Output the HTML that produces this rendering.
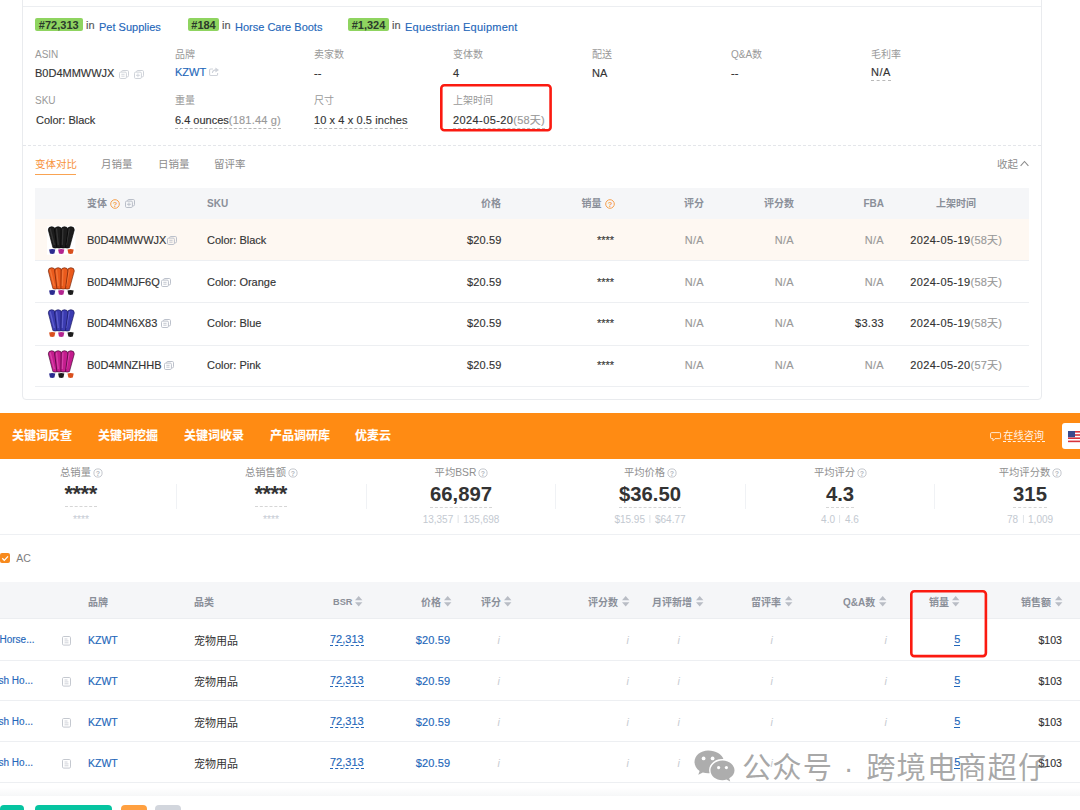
<!DOCTYPE html>
<html lang="zh-CN"><head><meta charset="utf-8"><title>page</title>
<style>
html,body{margin:0;padding:0;background:#fff;}
body{width:1080px;height:810px;overflow:hidden;position:relative;font-family:"Liberation Sans","Noto Sans CJK SC",sans-serif;}
.t{position:absolute;white-space:nowrap;-webkit-text-stroke:0.14px currentColor;}
.n{position:absolute;white-space:nowrap;}
.b{position:absolute;}
.g{color:#999}
.d{letter-spacing:0.4px}
.e{letter-spacing:0.2px}
.sp{display:inline-block;width:1px;height:8px;background:#dfe3e8;margin:0 4.5px;vertical-align:-0.5px}
svg{position:absolute;overflow:visible}
</style></head><body>

<div class="b" style="left:22px;top:-10px;width:1018px;height:408px;background:#fff;border:1px solid #e9ebee;border-radius:4px;"></div>
<div class="b" style="left:23px;top:6px;width:1018px;height:1px;background:#eceef1;"></div>
<div class="b" style="left:35px;top:18px;width:47.5px;height:13px;background:#8fd460;border-radius:2px;"></div>
<span class="n" style="top:16.5px;font-size:11px;color:#2b3a2b;line-height:16px;font-weight:700;left:58.75px;transform:translateX(-50%);">#72,313</span>
<span class="t" style="top:17px;font-size:11px;color:#555;line-height:16px;left:86px;">in</span>
<span class="t" style="top:18.8px;font-size:11px;color:#2467ba;line-height:16px;left:99px;">Pet Supplies</span>
<div class="b" style="left:188px;top:18px;width:31px;height:13px;background:#8fd460;border-radius:2px;"></div>
<span class="n" style="top:16.5px;font-size:11px;color:#2b3a2b;line-height:16px;font-weight:700;left:203.5px;transform:translateX(-50%);">#184</span>
<span class="t" style="top:17px;font-size:11px;color:#555;line-height:16px;left:222px;">in</span>
<span class="t" style="top:18.8px;font-size:11px;color:#2467ba;line-height:16px;left:235px;">Horse Care Boots</span>
<div class="b" style="left:348px;top:18px;width:41px;height:13px;background:#8fd460;border-radius:2px;"></div>
<span class="n" style="top:16.5px;font-size:11px;color:#2b3a2b;line-height:16px;font-weight:700;left:368.5px;transform:translateX(-50%);">#1,324</span>
<span class="t" style="top:17px;font-size:11px;color:#555;line-height:16px;left:392px;">in</span>
<span class="t" style="top:18.8px;font-size:11px;color:#2467ba;line-height:16px;left:405px;letter-spacing:0.22px;">Equestrian Equipment</span>
<span class="n" style="top:46.5px;font-size:10px;color:#999;line-height:16px;left:35px;">ASIN</span>
<span class="n" style="top:46.5px;font-size:10px;color:#999;line-height:16px;left:175px;">品牌</span>
<span class="n" style="top:46.5px;font-size:10px;color:#999;line-height:16px;left:314px;">卖家数</span>
<span class="n" style="top:46.5px;font-size:10px;color:#999;line-height:16px;left:453px;">变体数</span>
<span class="n" style="top:46.5px;font-size:10px;color:#999;line-height:16px;left:592px;">配送</span>
<span class="n" style="top:46.5px;font-size:10px;color:#999;line-height:16px;left:731px;">Q&amp;A数</span>
<span class="n" style="top:46.5px;font-size:10px;color:#999;line-height:16px;left:871px;">毛利率</span>
<span class="t" style="top:65.3px;font-size:11px;color:#333;line-height:16px;left:35px;">B0D4MMWWJX</span>
<svg style="left:119px;top:69.5px" width="10" height="9" viewBox="0 0 10 9"><rect x="2.6" y="0.5" width="6.9" height="6.4" rx="1.2" fill="#fff" stroke="#cfd3d9" stroke-width="1"/><rect x="0.5" y="2.1" width="6.9" height="6.4" rx="1.2" fill="#fff" stroke="#cfd3d9" stroke-width="1"/><path d="M2.3 4.3H5.6M2.3 6.2H5.6" stroke="#cfd3d9" stroke-width="0.9"/></svg>
<svg style="left:133.5px;top:69.5px" width="10" height="9" viewBox="0 0 10 9"><rect x="2.6" y="0.5" width="6.9" height="6.4" rx="1.2" fill="#fff" stroke="#cfd3d9" stroke-width="1"/><rect x="0.5" y="2.1" width="6.9" height="6.4" rx="1.2" fill="#fff" stroke="#cfd3d9" stroke-width="1"/><path d="M2 5.3H5.9M3.95 3.4V7.2" stroke="#cfd3d9" stroke-width="0.9"/></svg>
<span class="t" style="top:64px;font-size:11px;color:#2467ba;line-height:16px;left:175px;">KZWT</span>
<svg style="left:209px;top:67.3px" width="10.5" height="9" viewBox="0 0 10.5 9"><path d="M4 2H1.6Q0.6 2 0.6 3V7.6Q0.6 8.5 1.6 8.5H7.6Q8.6 8.5 8.6 7.6V6" fill="none" stroke="#cfd3da" stroke-width="1.1"/><path d="M3.4 6Q3.6 2.9 7 2.9" fill="none" stroke="#cfd3da" stroke-width="1.1"/><path d="M6.4 0.4L10 2.9L6.4 5.4Z" fill="#cfd3da"/></svg>
<span class="t" style="top:65.3px;font-size:11px;color:#333;line-height:16px;left:314px;">--</span>
<span class="t" style="top:65.3px;font-size:11px;color:#333;line-height:16px;left:453px;">4</span>
<span class="t" style="top:65.3px;font-size:11px;color:#333;line-height:16px;left:592px;">NA</span>
<span class="t" style="top:65.3px;font-size:11px;color:#333;line-height:16px;left:731px;">--</span>
<span class="t" style="top:64.8px;font-size:11px;color:#333;line-height:16px;left:871px;border-bottom:1px dashed #b9b9b9;line-height:15px;letter-spacing:0.5px;">N/A</span>
<span class="n" style="top:92.5px;font-size:10px;color:#999;line-height:16px;left:35px;">SKU</span>
<span class="n" style="top:92.5px;font-size:10px;color:#999;line-height:16px;left:175px;">重量</span>
<span class="n" style="top:92.5px;font-size:10px;color:#999;line-height:16px;left:314px;">尺寸</span>
<span class="n" style="top:92.5px;font-size:10px;color:#999;line-height:16px;left:453px;">上架时间</span>
<span class="t" style="top:112px;font-size:11px;color:#333;line-height:16px;left:36px;">Color: Black</span>
<span class="t" style="top:112.5px;font-size:11px;color:#333;line-height:16px;left:175px;border-bottom:1px dashed #b9b9b9;line-height:15px;">6.4 ounces<span class="g e">(181.44 g)</span></span>
<span class="t" style="top:112.5px;font-size:11px;color:#333;line-height:16px;left:314px;border-bottom:1px dashed #b9b9b9;line-height:15px;letter-spacing:0.1px;">10 x 4 x 0.5 inches</span>
<span class="t" style="top:112.5px;font-size:11px;color:#333;line-height:16px;left:453px;border-bottom:1px dashed #b9b9b9;line-height:15px;"><span class="d">2024-05-20</span><span class="g e">(58天)</span></span>
<div class="b" style="left:23px;top:144.5px;width:1018px;height:0px;background:transparent;border-top:1px dashed #e4e6ea;"></div>
<span class="n" style="top:156px;font-size:10.5px;color:#f7923a;line-height:16px;left:35px;">变体对比</span>
<div class="b" style="left:35px;top:173.6px;width:41px;height:1.4px;background:#f9a352;"></div>
<span class="n" style="top:156px;font-size:10.5px;color:#8c8c8c;line-height:16px;left:101px;">月销量</span>
<span class="n" style="top:156px;font-size:10.5px;color:#8c8c8c;line-height:16px;left:158px;">日销量</span>
<span class="n" style="top:156px;font-size:10.5px;color:#8c8c8c;line-height:16px;left:214px;">留评率</span>
<span class="n" style="top:156px;font-size:10.5px;color:#8c8c8c;line-height:16px;left:997px;">收起</span>
<svg style="left:1020px;top:160.3px" width="9" height="7" viewBox="0 0 9 7"><path d="M0.6 5.8 L4.5 1.5 L8.4 5.8" fill="none" stroke="#8c8c8c" stroke-width="1.1"/></svg>
<div class="b" style="left:35px;top:188px;width:994px;height:31px;background:#f5f6f8;"></div>
<span class="n" style="top:195.7px;font-size:10px;color:#8a8f99;line-height:16px;font-weight:700;left:87px;">变体</span>
<svg style="left:110.1px;top:198.8px" width="10" height="10" viewBox="0 0 10 10"><circle cx="5" cy="5" r="4.3" fill="none" stroke="#f5a04e" stroke-width="1"/><text x="5" y="7.6" font-size="7.5" font-weight="700" text-anchor="middle" fill="#f5a04e" font-family="Liberation Sans, sans-serif">?</text></svg>
<svg style="left:124.7px;top:199.2px" width="10" height="9" viewBox="0 0 10 9"><rect x="2.6" y="0.5" width="6.9" height="6.4" rx="1.2" fill="#f5f6f8" stroke="#b9bec8" stroke-width="1"/><rect x="0.5" y="2.1" width="6.9" height="6.4" rx="1.2" fill="#f5f6f8" stroke="#b9bec8" stroke-width="1"/><path d="M2 5.3H5.9M3.95 3.4V7.2" stroke="#b9bec8" stroke-width="0.9"/></svg>
<span class="n" style="top:195.7px;font-size:10px;color:#8a8f99;line-height:16px;font-weight:700;left:207px;">SKU</span>
<span class="n" style="top:195.7px;font-size:10px;color:#8a8f99;line-height:16px;font-weight:700;right:579px;">价格</span>
<span class="n" style="top:195.7px;font-size:10px;color:#8a8f99;line-height:16px;font-weight:700;right:478.5px;">销量</span>
<svg style="left:604.6px;top:198.8px" width="10" height="10" viewBox="0 0 10 10"><circle cx="5" cy="5" r="4.3" fill="none" stroke="#f5a04e" stroke-width="1"/><text x="5" y="7.6" font-size="7.5" font-weight="700" text-anchor="middle" fill="#f5a04e" font-family="Liberation Sans, sans-serif">?</text></svg>
<span class="n" style="top:195.7px;font-size:10px;color:#8a8f99;line-height:16px;font-weight:700;right:376px;">评分</span>
<span class="n" style="top:195.7px;font-size:10px;color:#8a8f99;line-height:16px;font-weight:700;right:286px;">评分数</span>
<span class="n" style="top:195.7px;font-size:10px;color:#8a8f99;line-height:16px;font-weight:700;right:196px;">FBA</span>
<span class="n" style="top:195.7px;font-size:10px;color:#8a8f99;line-height:16px;font-weight:700;left:956px;transform:translateX(-50%);">上架时间</span>
<div class="b" style="left:35px;top:219px;width:994px;height:41px;background:#fef8f2;"></div>
<div class="b" style="left:35px;top:260px;width:994px;height:1px;background:#edeff2;"></div>
<svg style="left:47px;top:225.9px" width="28.4" height="28.7" viewBox="0 0 28.4 28.7"><rect width="28.4" height="28.7" fill="#fff"/><path d="M1.3 4Q1.3 0.7 4.7 0.7Q8.1 0.7 8.1 4L10.5 21.6Q8.2 22.6 5.9 21.6Z" fill="#1c1c1c" stroke="#000" stroke-width="0.7" stroke-opacity="0.9"/><path d="M3.1 2.5L7.3 19" stroke="#555" stroke-width="1.3" stroke-opacity="0.45" fill="none"/><path d="M20.5 4Q20.5 0.7 23.9 0.7Q27.3 0.7 27.3 4L22.5 21.6Q20.2 22.6 17.9 21.6Z" fill="#1c1c1c" stroke="#000" stroke-width="0.7" stroke-opacity="0.9"/><path d="M22.3 2.5L19.3 19" stroke="#555" stroke-width="1.3" stroke-opacity="0.45" fill="none"/><path d="M7.7 4Q7.7 0.7 11.1 0.7Q14.5 0.7 14.5 4L14.5 21.6Q12.2 22.6 9.9 21.6Z" fill="#1c1c1c" stroke="#000" stroke-width="0.7" stroke-opacity="0.9"/><path d="M9.5 2.5L11.3 19" stroke="#555" stroke-width="1.3" stroke-opacity="0.45" fill="none"/><path d="M14.1 4Q14.1 0.7 17.5 0.7Q20.9 0.7 20.9 4L18.5 21.6Q16.2 22.6 13.9 21.6Z" fill="#1c1c1c" stroke="#000" stroke-width="0.7" stroke-opacity="0.9"/><path d="M15.9 2.5L15.3 19" stroke="#555" stroke-width="1.3" stroke-opacity="0.45" fill="none"/><path d="M2.1 23.4Q5.2 22.6 8.3 23.4L7.4 27.6Q5.2 28.4 3 27.6Z" fill="#2b2b8f"/><path d="M11.1 23.4Q14.2 22.6 17.3 23.4L16.4 27.6Q14.2 28.4 12 27.6Z" fill="#b3248f"/><path d="M20.5 23.4Q23.6 22.6 26.7 23.4L25.8 27.6Q23.6 28.4 21.4 27.6Z" fill="#d9501e"/></svg>
<span class="t" style="top:232.2px;font-size:11px;color:#333;line-height:16px;left:87px;">B0D4MMWWJX</span>
<svg style="left:167.3px;top:236px" width="10" height="9" viewBox="0 0 10 9"><rect x="2.6" y="0.5" width="6.9" height="6.4" rx="1.2" fill="#fef8f2" stroke="#bcc1cb" stroke-width="1"/><rect x="0.5" y="2.1" width="6.9" height="6.4" rx="1.2" fill="#fef8f2" stroke="#bcc1cb" stroke-width="1"/><path d="M2.3 4.3H5.6M2.3 6.2H5.6" stroke="#bcc1cb" stroke-width="0.9"/></svg>
<span class="t" style="top:232.2px;font-size:11px;color:#333;line-height:16px;left:207px;">Color: Black</span>
<span class="t" style="top:232.2px;font-size:11px;color:#333;line-height:16px;right:578.5px;letter-spacing:0.15px;">$20.59</span>
<span class="t" style="top:232.2px;font-size:11px;color:#333;line-height:16px;right:466px;">****</span>
<span class="t" style="top:232.2px;font-size:11px;color:#999;line-height:16px;right:376px;letter-spacing:0.3px;">N/A</span>
<span class="t" style="top:232.2px;font-size:11px;color:#999;line-height:16px;right:286px;letter-spacing:0.3px;">N/A</span>
<span class="t" style="top:232.2px;font-size:11px;color:#999;line-height:16px;right:196px;letter-spacing:0.3px;">N/A</span>
<span class="t" style="top:232.2px;font-size:11px;color:#333;line-height:16px;left:910.3px;"><span class="d">2024-05-19</span><span class="g e">(58天)</span></span>
<div class="b" style="left:35px;top:302px;width:994px;height:1px;background:#edeff2;"></div>
<svg style="left:47px;top:266.9px" width="28.4" height="28.7" viewBox="0 0 28.4 28.7"><rect width="28.4" height="28.7" fill="#fff"/><path d="M1.3 4Q1.3 0.7 4.7 0.7Q8.1 0.7 8.1 4L10.5 21.6Q8.2 22.6 5.9 21.6Z" fill="#ea5a1c" stroke="#6b1f05" stroke-width="0.7" stroke-opacity="0.9"/><path d="M3.1 2.5L7.3 19" stroke="#ff9a5a" stroke-width="1.3" stroke-opacity="0.45" fill="none"/><path d="M20.5 4Q20.5 0.7 23.9 0.7Q27.3 0.7 27.3 4L22.5 21.6Q20.2 22.6 17.9 21.6Z" fill="#ea5a1c" stroke="#6b1f05" stroke-width="0.7" stroke-opacity="0.9"/><path d="M22.3 2.5L19.3 19" stroke="#ff9a5a" stroke-width="1.3" stroke-opacity="0.45" fill="none"/><path d="M7.7 4Q7.7 0.7 11.1 0.7Q14.5 0.7 14.5 4L14.5 21.6Q12.2 22.6 9.9 21.6Z" fill="#ea5a1c" stroke="#6b1f05" stroke-width="0.7" stroke-opacity="0.9"/><path d="M9.5 2.5L11.3 19" stroke="#ff9a5a" stroke-width="1.3" stroke-opacity="0.45" fill="none"/><path d="M14.1 4Q14.1 0.7 17.5 0.7Q20.9 0.7 20.9 4L18.5 21.6Q16.2 22.6 13.9 21.6Z" fill="#ea5a1c" stroke="#6b1f05" stroke-width="0.7" stroke-opacity="0.9"/><path d="M15.9 2.5L15.3 19" stroke="#ff9a5a" stroke-width="1.3" stroke-opacity="0.45" fill="none"/><path d="M2.1 23.4Q5.2 22.6 8.3 23.4L7.4 27.6Q5.2 28.4 3 27.6Z" fill="#2b2b8f"/><path d="M11.1 23.4Q14.2 22.6 17.3 23.4L16.4 27.6Q14.2 28.4 12 27.6Z" fill="#b3248f"/><path d="M20.5 23.4Q23.6 22.6 26.7 23.4L25.8 27.6Q23.6 28.4 21.4 27.6Z" fill="#1c1c1c"/></svg>
<span class="t" style="top:273.7px;font-size:11px;color:#333;line-height:16px;left:87px;">B0D4MMJF6Q</span>
<svg style="left:161.2px;top:277.5px" width="10" height="9" viewBox="0 0 10 9"><rect x="2.6" y="0.5" width="6.9" height="6.4" rx="1.2" fill="#fff" stroke="#bcc1cb" stroke-width="1"/><rect x="0.5" y="2.1" width="6.9" height="6.4" rx="1.2" fill="#fff" stroke="#bcc1cb" stroke-width="1"/><path d="M2.3 4.3H5.6M2.3 6.2H5.6" stroke="#bcc1cb" stroke-width="0.9"/></svg>
<span class="t" style="top:273.7px;font-size:11px;color:#333;line-height:16px;left:207px;">Color: Orange</span>
<span class="t" style="top:273.7px;font-size:11px;color:#333;line-height:16px;right:578.5px;letter-spacing:0.15px;">$20.59</span>
<span class="t" style="top:273.7px;font-size:11px;color:#333;line-height:16px;right:466px;">****</span>
<span class="t" style="top:273.7px;font-size:11px;color:#999;line-height:16px;right:376px;letter-spacing:0.3px;">N/A</span>
<span class="t" style="top:273.7px;font-size:11px;color:#999;line-height:16px;right:286px;letter-spacing:0.3px;">N/A</span>
<span class="t" style="top:273.7px;font-size:11px;color:#999;line-height:16px;right:196px;letter-spacing:0.3px;">N/A</span>
<span class="t" style="top:273.7px;font-size:11px;color:#333;line-height:16px;left:910.3px;"><span class="d">2024-05-19</span><span class="g e">(58天)</span></span>
<div class="b" style="left:35px;top:344.5px;width:994px;height:1px;background:#edeff2;"></div>
<svg style="left:47px;top:308.9px" width="28.4" height="28.7" viewBox="0 0 28.4 28.7"><rect width="28.4" height="28.7" fill="#fff"/><path d="M1.3 4Q1.3 0.7 4.7 0.7Q8.1 0.7 8.1 4L10.5 21.6Q8.2 22.6 5.9 21.6Z" fill="#3b3bb0" stroke="#14145a" stroke-width="0.7" stroke-opacity="0.9"/><path d="M3.1 2.5L7.3 19" stroke="#8a8af0" stroke-width="1.3" stroke-opacity="0.45" fill="none"/><path d="M20.5 4Q20.5 0.7 23.9 0.7Q27.3 0.7 27.3 4L22.5 21.6Q20.2 22.6 17.9 21.6Z" fill="#3b3bb0" stroke="#14145a" stroke-width="0.7" stroke-opacity="0.9"/><path d="M22.3 2.5L19.3 19" stroke="#8a8af0" stroke-width="1.3" stroke-opacity="0.45" fill="none"/><path d="M7.7 4Q7.7 0.7 11.1 0.7Q14.5 0.7 14.5 4L14.5 21.6Q12.2 22.6 9.9 21.6Z" fill="#3b3bb0" stroke="#14145a" stroke-width="0.7" stroke-opacity="0.9"/><path d="M9.5 2.5L11.3 19" stroke="#8a8af0" stroke-width="1.3" stroke-opacity="0.45" fill="none"/><path d="M14.1 4Q14.1 0.7 17.5 0.7Q20.9 0.7 20.9 4L18.5 21.6Q16.2 22.6 13.9 21.6Z" fill="#3b3bb0" stroke="#14145a" stroke-width="0.7" stroke-opacity="0.9"/><path d="M15.9 2.5L15.3 19" stroke="#8a8af0" stroke-width="1.3" stroke-opacity="0.45" fill="none"/><path d="M2.1 23.4Q5.2 22.6 8.3 23.4L7.4 27.6Q5.2 28.4 3 27.6Z" fill="#d9501e"/><path d="M11.1 23.4Q14.2 22.6 17.3 23.4L16.4 27.6Q14.2 28.4 12 27.6Z" fill="#b3248f"/><path d="M20.5 23.4Q23.6 22.6 26.7 23.4L25.8 27.6Q23.6 28.4 21.4 27.6Z" fill="#1c1c1c"/></svg>
<span class="t" style="top:315.4px;font-size:11px;color:#333;line-height:16px;left:87px;">B0D4MN6X83</span>
<svg style="left:161.2px;top:319.2px" width="10" height="9" viewBox="0 0 10 9"><rect x="2.6" y="0.5" width="6.9" height="6.4" rx="1.2" fill="#fff" stroke="#bcc1cb" stroke-width="1"/><rect x="0.5" y="2.1" width="6.9" height="6.4" rx="1.2" fill="#fff" stroke="#bcc1cb" stroke-width="1"/><path d="M2.3 4.3H5.6M2.3 6.2H5.6" stroke="#bcc1cb" stroke-width="0.9"/></svg>
<span class="t" style="top:315.4px;font-size:11px;color:#333;line-height:16px;left:207px;">Color: Blue</span>
<span class="t" style="top:315.4px;font-size:11px;color:#333;line-height:16px;right:578.5px;letter-spacing:0.15px;">$20.59</span>
<span class="t" style="top:315.4px;font-size:11px;color:#333;line-height:16px;right:466px;">****</span>
<span class="t" style="top:315.4px;font-size:11px;color:#999;line-height:16px;right:376px;letter-spacing:0.3px;">N/A</span>
<span class="t" style="top:315.4px;font-size:11px;color:#999;line-height:16px;right:286px;letter-spacing:0.3px;">N/A</span>
<span class="t" style="top:315.4px;font-size:11px;color:#333;line-height:16px;right:196px;letter-spacing:0.3px;">$3.33</span>
<span class="t" style="top:315.4px;font-size:11px;color:#333;line-height:16px;left:910.3px;"><span class="d">2024-05-19</span><span class="g e">(58天)</span></span>
<div class="b" style="left:35px;top:385.7px;width:994px;height:1px;background:#edeff2;"></div>
<svg style="left:47px;top:350.4px" width="28.4" height="28.7" viewBox="0 0 28.4 28.7"><rect width="28.4" height="28.7" fill="#fff"/><path d="M1.3 4Q1.3 0.7 4.7 0.7Q8.1 0.7 8.1 4L10.5 21.6Q8.2 22.6 5.9 21.6Z" fill="#c41c8e" stroke="#3a062c" stroke-width="0.7" stroke-opacity="0.9"/><path d="M3.1 2.5L7.3 19" stroke="#f070c8" stroke-width="1.3" stroke-opacity="0.45" fill="none"/><path d="M20.5 4Q20.5 0.7 23.9 0.7Q27.3 0.7 27.3 4L22.5 21.6Q20.2 22.6 17.9 21.6Z" fill="#c41c8e" stroke="#3a062c" stroke-width="0.7" stroke-opacity="0.9"/><path d="M22.3 2.5L19.3 19" stroke="#f070c8" stroke-width="1.3" stroke-opacity="0.45" fill="none"/><path d="M7.7 4Q7.7 0.7 11.1 0.7Q14.5 0.7 14.5 4L14.5 21.6Q12.2 22.6 9.9 21.6Z" fill="#c41c8e" stroke="#3a062c" stroke-width="0.7" stroke-opacity="0.9"/><path d="M9.5 2.5L11.3 19" stroke="#f070c8" stroke-width="1.3" stroke-opacity="0.45" fill="none"/><path d="M14.1 4Q14.1 0.7 17.5 0.7Q20.9 0.7 20.9 4L18.5 21.6Q16.2 22.6 13.9 21.6Z" fill="#c41c8e" stroke="#3a062c" stroke-width="0.7" stroke-opacity="0.9"/><path d="M15.9 2.5L15.3 19" stroke="#f070c8" stroke-width="1.3" stroke-opacity="0.45" fill="none"/><path d="M2.1 23.4Q5.2 22.6 8.3 23.4L7.4 27.6Q5.2 28.4 3 27.6Z" fill="#2b2b8f"/><path d="M11.1 23.4Q14.2 22.6 17.3 23.4L16.4 27.6Q14.2 28.4 12 27.6Z" fill="#1c1c1c"/><path d="M20.5 23.4Q23.6 22.6 26.7 23.4L25.8 27.6Q23.6 28.4 21.4 27.6Z" fill="#d9501e"/></svg>
<span class="t" style="top:357px;font-size:11px;color:#333;line-height:16px;left:87px;">B0D4MNZHHB</span>
<svg style="left:164.3px;top:360.8px" width="10" height="9" viewBox="0 0 10 9"><rect x="2.6" y="0.5" width="6.9" height="6.4" rx="1.2" fill="#fff" stroke="#bcc1cb" stroke-width="1"/><rect x="0.5" y="2.1" width="6.9" height="6.4" rx="1.2" fill="#fff" stroke="#bcc1cb" stroke-width="1"/><path d="M2.3 4.3H5.6M2.3 6.2H5.6" stroke="#bcc1cb" stroke-width="0.9"/></svg>
<span class="t" style="top:357px;font-size:11px;color:#333;line-height:16px;left:207px;">Color: Pink</span>
<span class="t" style="top:357px;font-size:11px;color:#333;line-height:16px;right:578.5px;letter-spacing:0.15px;">$20.59</span>
<span class="t" style="top:357px;font-size:11px;color:#333;line-height:16px;right:466px;">****</span>
<span class="t" style="top:357px;font-size:11px;color:#999;line-height:16px;right:376px;letter-spacing:0.3px;">N/A</span>
<span class="t" style="top:357px;font-size:11px;color:#999;line-height:16px;right:286px;letter-spacing:0.3px;">N/A</span>
<span class="t" style="top:357px;font-size:11px;color:#999;line-height:16px;right:196px;letter-spacing:0.3px;">N/A</span>
<span class="t" style="top:357px;font-size:11px;color:#333;line-height:16px;left:910.3px;"><span class="d">2024-05-20</span><span class="g e">(57天)</span></span>
<div class="b" style="left:0px;top:413px;width:1080px;height:45.7px;background:#ff8b13;"></div>
<span class="t" style="top:428px;font-size:12px;color:#fff;line-height:16px;font-weight:700;left:12px;">关键词反查</span>
<span class="t" style="top:428px;font-size:12px;color:#fff;line-height:16px;font-weight:700;left:98px;">关键词挖掘</span>
<span class="t" style="top:428px;font-size:12px;color:#fff;line-height:16px;font-weight:700;left:184px;">关键词收录</span>
<span class="t" style="top:428px;font-size:12px;color:#fff;line-height:16px;font-weight:700;left:270px;">产品调研库</span>
<span class="t" style="top:428px;font-size:12px;color:#fff;line-height:16px;font-weight:700;left:355px;">优麦云</span>
<svg style="left:990.3px;top:431.6px" width="12" height="10" viewBox="0 0 12 10"><path d="M1.6 0.6H9.6Q10.6 0.6 10.6 1.6V5.6Q10.6 6.6 9.6 6.6H5L3 8.8V6.6H1.6Q0.6 6.6 0.6 5.6V1.6Q0.6 0.6 1.6 0.6Z" fill="none" stroke="rgba(255,255,255,0.8)" stroke-width="1"/></svg>
<span class="n" style="top:428.2px;font-size:10.2px;color:rgba(255,255,255,0.92);line-height:16px;left:1003.3px;">在线咨询</span>
<div class="b" style="left:1003.3px;top:441px;width:41.5px;height:0px;background:transparent;border-top:1px dashed rgba(255,255,255,0.9);"></div>
<div class="b" style="left:1062px;top:423px;width:22px;height:26px;background:#fff;border-radius:3px;"></div>
<svg style="left:1068.3px;top:430.5px" width="14" height="11.2" viewBox="0 0 14 11.2"><rect width="14" height="11" fill="#fff"/><rect x="0" y="0" width="14" height="1.6" fill="#d8343c"/><rect x="0" y="3.2" width="14" height="1.6" fill="#d8343c"/><rect x="0" y="6.4" width="14" height="1.6" fill="#d8343c"/><rect x="0" y="9.6" width="14" height="1.6" fill="#d8343c"/><rect width="7" height="6.2" fill="#3a4a8c"/></svg>
<span class="n" style="top:464.6px;font-size:10.3px;color:#8f8f8f;line-height:16px;left:75.5px;transform:translateX(-50%);">总销量</span>
<svg style="left:92.7px;top:467.6px" width="10" height="10" viewBox="0 0 10 10"><circle cx="5" cy="5" r="4.1" fill="none" stroke="#b5b9c0" stroke-width="0.8"/><text x="5" y="7.6" font-size="7" font-weight="700" text-anchor="middle" fill="#b5b9c0" font-family="Liberation Sans, sans-serif">?</text></svg>
<span class="n" style="top:480.2px;font-size:22px;color:#333;line-height:28px;font-weight:700;left:80.6px;transform:translateX(-50%);letter-spacing:-0.5px;">****</span>
<div class="b" style="left:64.75px;top:505.7px;width:32.5px;height:0px;background:transparent;border-top:1px dashed #d6d6d6;"></div>
<span class="n" style="top:512.2px;font-size:10.3px;color:#c6ccd4;line-height:16px;left:81px;transform:translateX(-50%);">****</span>
<span class="n" style="top:464.6px;font-size:10.3px;color:#8f8f8f;line-height:16px;left:265.5px;transform:translateX(-50%);">总销售额</span>
<svg style="left:287.85px;top:467.6px" width="10" height="10" viewBox="0 0 10 10"><circle cx="5" cy="5" r="4.1" fill="none" stroke="#b5b9c0" stroke-width="0.8"/><text x="5" y="7.6" font-size="7" font-weight="700" text-anchor="middle" fill="#b5b9c0" font-family="Liberation Sans, sans-serif">?</text></svg>
<span class="n" style="top:480.2px;font-size:22px;color:#333;line-height:28px;font-weight:700;left:270.6px;transform:translateX(-50%);letter-spacing:-0.5px;">****</span>
<div class="b" style="left:254.75px;top:505.7px;width:32.5px;height:0px;background:transparent;border-top:1px dashed #d6d6d6;"></div>
<span class="n" style="top:512.2px;font-size:10.3px;color:#c6ccd4;line-height:16px;left:271px;transform:translateX(-50%);">****</span>
<span class="n" style="top:464.6px;font-size:10.3px;color:#8f8f8f;line-height:16px;left:455.5px;transform:translateX(-50%);">平均BSR</span>
<svg style="left:477.85px;top:467.6px" width="10" height="10" viewBox="0 0 10 10"><circle cx="5" cy="5" r="4.1" fill="none" stroke="#b5b9c0" stroke-width="0.8"/><text x="5" y="7.6" font-size="7" font-weight="700" text-anchor="middle" fill="#b5b9c0" font-family="Liberation Sans, sans-serif">?</text></svg>
<span class="n" style="top:482px;font-size:20.3px;color:#333;line-height:24px;font-weight:700;left:461px;transform:translateX(-50%);">66,897</span>
<div class="b" style="left:430px;top:506.6px;width:62px;height:0px;background:transparent;border-top:1px dashed #d6d6d6;"></div>
<span class="n" style="top:511.6px;font-size:10px;color:#c3c9d1;line-height:16px;left:461px;transform:translateX(-50%);">13,357<i class="sp"></i>135,698</span>
<span class="n" style="top:464.6px;font-size:10.3px;color:#8f8f8f;line-height:16px;left:644.5px;transform:translateX(-50%);">平均价格</span>
<svg style="left:666.85px;top:467.6px" width="10" height="10" viewBox="0 0 10 10"><circle cx="5" cy="5" r="4.1" fill="none" stroke="#b5b9c0" stroke-width="0.8"/><text x="5" y="7.6" font-size="7" font-weight="700" text-anchor="middle" fill="#b5b9c0" font-family="Liberation Sans, sans-serif">?</text></svg>
<span class="n" style="top:482px;font-size:20.3px;color:#333;line-height:24px;font-weight:700;left:650px;transform:translateX(-50%);">$36.50</span>
<div class="b" style="left:619.25px;top:506.6px;width:61.5px;height:0px;background:transparent;border-top:1px dashed #d6d6d6;"></div>
<span class="n" style="top:511.6px;font-size:10px;color:#c3c9d1;line-height:16px;left:650px;transform:translateX(-50%);">$15.95<i class="sp"></i>$64.77</span>
<span class="n" style="top:464.6px;font-size:10.3px;color:#8f8f8f;line-height:16px;left:834.5px;transform:translateX(-50%);">平均评分</span>
<svg style="left:856.85px;top:467.6px" width="10" height="10" viewBox="0 0 10 10"><circle cx="5" cy="5" r="4.1" fill="none" stroke="#b5b9c0" stroke-width="0.8"/><text x="5" y="7.6" font-size="7" font-weight="700" text-anchor="middle" fill="#b5b9c0" font-family="Liberation Sans, sans-serif">?</text></svg>
<span class="n" style="top:482px;font-size:20.3px;color:#333;line-height:24px;font-weight:700;left:840px;transform:translateX(-50%);">4.3</span>
<div class="b" style="left:825.75px;top:506.6px;width:28.5px;height:0px;background:transparent;border-top:1px dashed #d6d6d6;"></div>
<span class="n" style="top:511.6px;font-size:10px;color:#c3c9d1;line-height:16px;left:840px;transform:translateX(-50%);">4.0<i class="sp"></i>4.6</span>
<span class="n" style="top:464.6px;font-size:10.3px;color:#8f8f8f;line-height:16px;left:1024.5px;transform:translateX(-50%);">平均评分数</span>
<svg style="left:1051.95px;top:467.6px" width="10" height="10" viewBox="0 0 10 10"><circle cx="5" cy="5" r="4.1" fill="none" stroke="#b5b9c0" stroke-width="0.8"/><text x="5" y="7.6" font-size="7" font-weight="700" text-anchor="middle" fill="#b5b9c0" font-family="Liberation Sans, sans-serif">?</text></svg>
<span class="n" style="top:482px;font-size:20.3px;color:#333;line-height:24px;font-weight:700;left:1030px;transform:translateX(-50%);">315</span>
<div class="b" style="left:1013.25px;top:506.6px;width:33.5px;height:0px;background:transparent;border-top:1px dashed #d6d6d6;"></div>
<span class="n" style="top:511.6px;font-size:10px;color:#c3c9d1;line-height:16px;left:1030px;transform:translateX(-50%);">78<i class="sp"></i>1,009</span>
<div class="b" style="left:175.5px;top:484px;width:1px;height:25px;background:#f0f2f5;"></div>
<div class="b" style="left:365.5px;top:484px;width:1px;height:25px;background:#f0f2f5;"></div>
<div class="b" style="left:555px;top:484px;width:1px;height:25px;background:#f0f2f5;"></div>
<div class="b" style="left:744.5px;top:484px;width:1px;height:25px;background:#f0f2f5;"></div>
<div class="b" style="left:934px;top:484px;width:1px;height:25px;background:#f0f2f5;"></div>
<div class="b" style="left:0px;top:534.2px;width:1080px;height:1px;background:#eef0f3;"></div>
<div class="b" style="left:0px;top:552.6px;width:10.2px;height:10.6px;background:#f78a1d;border-radius:2px;"></div>
<svg style="left:0px;top:552.6px" width="10.2" height="10.6" viewBox="0 0 10.2 10.6"><path d="M2.3 5.3L4.3 7.4L8 3.4" fill="none" stroke="#fff" stroke-width="1.3"/></svg>
<span class="n" style="top:550.2px;font-size:10.5px;color:#7d7d7d;line-height:16px;left:16.3px;">AC</span>
<div class="b" style="left:0px;top:581.5px;width:1080px;height:37px;background:#f5f6f8;"></div>
<div class="b" style="left:0px;top:618px;width:1080px;height:1px;background:#eceef1;"></div>
<span class="n" style="top:594.8px;font-size:10px;color:#8a8f99;line-height:16px;font-weight:700;left:88px;">品牌</span>
<span class="n" style="top:594.8px;font-size:10px;color:#8a8f99;line-height:16px;font-weight:700;left:194px;">品类</span>
<span class="n" style="top:594.3px;font-size:9.2px;color:#8a8f99;line-height:16px;font-weight:700;left:333px;">BSR</span>
<svg style="left:355.3px;top:595.75px" width="7.4" height="10.5" viewBox="0 0 7.4 10.5"><path d="M0 4.2L3.7 0L7.4 4.2Z M0 6.3L3.7 10.5L7.4 6.3Z" fill="#b9bdc5"/></svg>
<span class="n" style="top:594.8px;font-size:10px;color:#8a8f99;line-height:16px;font-weight:700;left:421px;">价格</span>
<svg style="left:444px;top:595.75px" width="7.4" height="10.5" viewBox="0 0 7.4 10.5"><path d="M0 4.2L3.7 0L7.4 4.2Z M0 6.3L3.7 10.5L7.4 6.3Z" fill="#b9bdc5"/></svg>
<span class="n" style="top:594.8px;font-size:10px;color:#8a8f99;line-height:16px;font-weight:700;left:481px;">评分</span>
<svg style="left:504px;top:595.75px" width="7.4" height="10.5" viewBox="0 0 7.4 10.5"><path d="M0 4.2L3.7 0L7.4 4.2Z M0 6.3L3.7 10.5L7.4 6.3Z" fill="#b9bdc5"/></svg>
<span class="n" style="top:594.8px;font-size:10px;color:#8a8f99;line-height:16px;font-weight:700;left:588px;">评分数</span>
<svg style="left:621.5px;top:595.75px" width="7.4" height="10.5" viewBox="0 0 7.4 10.5"><path d="M0 4.2L3.7 0L7.4 4.2Z M0 6.3L3.7 10.5L7.4 6.3Z" fill="#b9bdc5"/></svg>
<span class="n" style="top:594.8px;font-size:10px;color:#8a8f99;line-height:16px;font-weight:700;left:652px;">月评新增</span>
<svg style="left:695.5px;top:595.75px" width="7.4" height="10.5" viewBox="0 0 7.4 10.5"><path d="M0 4.2L3.7 0L7.4 4.2Z M0 6.3L3.7 10.5L7.4 6.3Z" fill="#b9bdc5"/></svg>
<span class="n" style="top:594.8px;font-size:10px;color:#8a8f99;line-height:16px;font-weight:700;left:751px;">留评率</span>
<svg style="left:784.5px;top:595.75px" width="7.4" height="10.5" viewBox="0 0 7.4 10.5"><path d="M0 4.2L3.7 0L7.4 4.2Z M0 6.3L3.7 10.5L7.4 6.3Z" fill="#b9bdc5"/></svg>
<span class="n" style="top:594.8px;font-size:10px;color:#8a8f99;line-height:16px;font-weight:700;left:843px;">Q&amp;A数</span>
<svg style="left:878.5px;top:595.75px" width="7.4" height="10.5" viewBox="0 0 7.4 10.5"><path d="M0 4.2L3.7 0L7.4 4.2Z M0 6.3L3.7 10.5L7.4 6.3Z" fill="#b9bdc5"/></svg>
<span class="n" style="top:594.8px;font-size:10px;color:#8a8f99;line-height:16px;font-weight:700;left:929px;">销量</span>
<svg style="left:952px;top:595.75px" width="7.4" height="10.5" viewBox="0 0 7.4 10.5"><path d="M0 4.2L3.7 0L7.4 4.2Z M0 6.3L3.7 10.5L7.4 6.3Z" fill="#b9bdc5"/></svg>
<span class="n" style="top:594.8px;font-size:10px;color:#8a8f99;line-height:16px;font-weight:700;left:1021px;">销售额</span>
<svg style="left:1054.5px;top:595.75px" width="7.4" height="10.5" viewBox="0 0 7.4 10.5"><path d="M0 4.2L3.7 0L7.4 4.2Z M0 6.3L3.7 10.5L7.4 6.3Z" fill="#b9bdc5"/></svg>
<div class="b" style="left:0px;top:659.6px;width:1080px;height:1px;background:#edeff2;"></div>
<span class="t" style="top:632.2px;font-size:10px;color:#2467ba;line-height:16px;right:1045.5px;">Horse...</span>
<svg style="left:61.7px;top:636.2px" width="9" height="9.6" viewBox="0 0 9 9.6"><rect x="0.5" y="0.5" width="8" height="8.6" rx="1.2" fill="#fff" stroke="#c4c8cf" stroke-width="1"/><path d="M2.5 3H5.5M2.5 4.9H6.5M2.5 6.8H6.5" stroke="#c4c8cf" stroke-width="0.8"/></svg>
<span class="t" style="top:631.7px;font-size:10.5px;color:#2467ba;line-height:16px;left:88px;">KZWT</span>
<span class="n" style="top:632.5px;font-size:11px;color:#333;line-height:16px;left:194px;">宠物用品</span>
<span class="t" style="top:633.1px;font-size:11px;color:#2467ba;line-height:16px;left:330px;border-bottom:1px dashed #2467ba;line-height:12px;">72,313</span>
<span class="t" style="top:631.9px;font-size:11px;color:#2467ba;line-height:16px;right:629.7px;letter-spacing:0.15px;">$20.59</span>
<span class="n" style="top:631.9px;font-size:10.5px;color:#c6cad0;line-height:16px;left:497.6px;font-style:italic;">i</span>
<span class="n" style="top:631.9px;font-size:10.5px;color:#c6cad0;line-height:16px;left:626.6px;font-style:italic;">i</span>
<span class="n" style="top:631.9px;font-size:10.5px;color:#c6cad0;line-height:16px;left:677.6px;font-style:italic;">i</span>
<span class="n" style="top:631.9px;font-size:10.5px;color:#c6cad0;line-height:16px;left:770.6px;font-style:italic;">i</span>
<span class="n" style="top:631.9px;font-size:10.5px;color:#c6cad0;line-height:16px;left:884.6px;font-style:italic;">i</span>
<span class="t" style="top:633.1px;font-size:11px;color:#2467ba;line-height:16px;left:954.3px;border-bottom:1px dashed #2467ba;line-height:12px;">5</span>
<span class="t" style="top:631.9px;font-size:10.6px;color:#333;line-height:16px;right:18px;">$103</span>
<div class="b" style="left:0px;top:700.3px;width:1080px;height:1px;background:#edeff2;"></div>
<span class="t" style="top:673.4px;font-size:10px;color:#2467ba;line-height:16px;right:1047px;">sh Ho...</span>
<svg style="left:61.7px;top:677.4px" width="9" height="9.6" viewBox="0 0 9 9.6"><rect x="0.5" y="0.5" width="8" height="8.6" rx="1.2" fill="#fff" stroke="#c4c8cf" stroke-width="1"/><path d="M2.5 3H5.5M2.5 4.9H6.5M2.5 6.8H6.5" stroke="#c4c8cf" stroke-width="0.8"/></svg>
<span class="t" style="top:672.9px;font-size:10.5px;color:#2467ba;line-height:16px;left:88px;">KZWT</span>
<span class="n" style="top:673.7px;font-size:11px;color:#333;line-height:16px;left:194px;">宠物用品</span>
<span class="t" style="top:674.3px;font-size:11px;color:#2467ba;line-height:16px;left:330px;border-bottom:1px dashed #2467ba;line-height:12px;">72,313</span>
<span class="t" style="top:673.1px;font-size:11px;color:#2467ba;line-height:16px;right:629.7px;letter-spacing:0.15px;">$20.59</span>
<span class="n" style="top:673.1px;font-size:10.5px;color:#c6cad0;line-height:16px;left:497.6px;font-style:italic;">i</span>
<span class="n" style="top:673.1px;font-size:10.5px;color:#c6cad0;line-height:16px;left:626.6px;font-style:italic;">i</span>
<span class="n" style="top:673.1px;font-size:10.5px;color:#c6cad0;line-height:16px;left:677.6px;font-style:italic;">i</span>
<span class="n" style="top:673.1px;font-size:10.5px;color:#c6cad0;line-height:16px;left:770.6px;font-style:italic;">i</span>
<span class="n" style="top:673.1px;font-size:10.5px;color:#c6cad0;line-height:16px;left:884.6px;font-style:italic;">i</span>
<span class="t" style="top:674.3px;font-size:11px;color:#2467ba;line-height:16px;left:954.3px;border-bottom:1px dashed #2467ba;line-height:12px;">5</span>
<span class="t" style="top:673.1px;font-size:10.6px;color:#333;line-height:16px;right:18px;">$103</span>
<div class="b" style="left:0px;top:741.3px;width:1080px;height:1px;background:#edeff2;"></div>
<span class="t" style="top:714.4px;font-size:10px;color:#2467ba;line-height:16px;right:1047px;">sh Ho...</span>
<svg style="left:61.7px;top:718.4px" width="9" height="9.6" viewBox="0 0 9 9.6"><rect x="0.5" y="0.5" width="8" height="8.6" rx="1.2" fill="#fff" stroke="#c4c8cf" stroke-width="1"/><path d="M2.5 3H5.5M2.5 4.9H6.5M2.5 6.8H6.5" stroke="#c4c8cf" stroke-width="0.8"/></svg>
<span class="t" style="top:713.9px;font-size:10.5px;color:#2467ba;line-height:16px;left:88px;">KZWT</span>
<span class="n" style="top:714.7px;font-size:11px;color:#333;line-height:16px;left:194px;">宠物用品</span>
<span class="t" style="top:715.3px;font-size:11px;color:#2467ba;line-height:16px;left:330px;border-bottom:1px dashed #2467ba;line-height:12px;">72,313</span>
<span class="t" style="top:714.1px;font-size:11px;color:#2467ba;line-height:16px;right:629.7px;letter-spacing:0.15px;">$20.59</span>
<span class="n" style="top:714.1px;font-size:10.5px;color:#c6cad0;line-height:16px;left:497.6px;font-style:italic;">i</span>
<span class="n" style="top:714.1px;font-size:10.5px;color:#c6cad0;line-height:16px;left:626.6px;font-style:italic;">i</span>
<span class="n" style="top:714.1px;font-size:10.5px;color:#c6cad0;line-height:16px;left:677.6px;font-style:italic;">i</span>
<span class="n" style="top:714.1px;font-size:10.5px;color:#c6cad0;line-height:16px;left:770.6px;font-style:italic;">i</span>
<span class="n" style="top:714.1px;font-size:10.5px;color:#c6cad0;line-height:16px;left:884.6px;font-style:italic;">i</span>
<span class="t" style="top:715.3px;font-size:11px;color:#2467ba;line-height:16px;left:954.3px;border-bottom:1px dashed #2467ba;line-height:12px;">5</span>
<span class="t" style="top:714.1px;font-size:10.6px;color:#333;line-height:16px;right:18px;">$103</span>
<div class="b" style="left:0px;top:782px;width:1080px;height:1px;background:#edeff2;"></div>
<span class="t" style="top:755.4px;font-size:10px;color:#2467ba;line-height:16px;right:1047px;">sh Ho...</span>
<svg style="left:61.7px;top:759.4px" width="9" height="9.6" viewBox="0 0 9 9.6"><rect x="0.5" y="0.5" width="8" height="8.6" rx="1.2" fill="#fff" stroke="#c4c8cf" stroke-width="1"/><path d="M2.5 3H5.5M2.5 4.9H6.5M2.5 6.8H6.5" stroke="#c4c8cf" stroke-width="0.8"/></svg>
<span class="t" style="top:754.9px;font-size:10.5px;color:#2467ba;line-height:16px;left:88px;">KZWT</span>
<span class="n" style="top:755.7px;font-size:11px;color:#333;line-height:16px;left:194px;">宠物用品</span>
<span class="t" style="top:756.3px;font-size:11px;color:#2467ba;line-height:16px;left:330px;border-bottom:1px dashed #2467ba;line-height:12px;">72,313</span>
<span class="t" style="top:755.1px;font-size:11px;color:#2467ba;line-height:16px;right:629.7px;letter-spacing:0.15px;">$20.59</span>
<span class="n" style="top:755.1px;font-size:10.5px;color:#c6cad0;line-height:16px;left:497.6px;font-style:italic;">i</span>
<span class="n" style="top:755.1px;font-size:10.5px;color:#c6cad0;line-height:16px;left:626.6px;font-style:italic;">i</span>
<span class="n" style="top:755.1px;font-size:10.5px;color:#c6cad0;line-height:16px;left:677.6px;font-style:italic;">i</span>
<span class="n" style="top:755.1px;font-size:10.5px;color:#c6cad0;line-height:16px;left:770.6px;font-style:italic;">i</span>
<span class="n" style="top:755.1px;font-size:10.5px;color:#c6cad0;line-height:16px;left:884.6px;font-style:italic;">i</span>
<span class="t" style="top:756.3px;font-size:11px;color:#2467ba;line-height:16px;left:954.3px;border-bottom:1px dashed #2467ba;line-height:12px;">5</span>
<span class="t" style="top:755.1px;font-size:10.6px;color:#333;line-height:16px;right:18px;">$103</span>
<div class="b" style="left:0px;top:783px;width:1080px;height:13px;background:linear-gradient(#fff 35%,#f6f7f8);"></div>
<div class="b" style="left:0px;top:805px;width:24.4px;height:10px;background:#06c4a1;border-radius:4px;"></div>
<div class="b" style="left:35px;top:805px;width:77.2px;height:10px;background:#06c4a1;border-radius:4px;"></div>
<div class="b" style="left:120.6px;top:805px;width:26px;height:10px;background:#ffa040;border-radius:4px;"></div>
<div class="b" style="left:155px;top:805px;width:25.6px;height:10px;background:#d2d6dd;border-radius:4px;"></div>
<svg style="left:440px;top:83.8px" width="111.9" height="47.6" viewBox="0 0 111.9 47.6"><rect x="1.3" y="1.3" width="109.3" height="45" rx="3" fill="none" stroke="#fb1a10" stroke-width="2.6"/></svg>
<svg style="left:909.7px;top:589.7px" width="77.2" height="67.4" viewBox="0 0 77.2 67.4"><rect x="1.3" y="1.3" width="74.6" height="64.8" rx="3" fill="none" stroke="#fb1a10" stroke-width="2.6"/></svg>
<svg style="left:694px;top:750px" width="41" height="32.5" viewBox="0 0 41 32.5"><g opacity="0.82"><path d="M14.2 0.5C6.6 0.5 0.5 5.6 0.5 12c0 3.6 2 6.8 5.1 8.9l-1.3 3.9 4.6-2.3c1.6 0.5 3.4 0.8 5.3 0.8 0.5 0 0.9 0 1.4-0.1-0.3-1-0.5-2-0.5-3.100 0-6.100 5.900-11.100 13.100-11.100 0.400 0 0.800 0 1.200 0.100C28 4.200 21.700 0.500 14.200 0.500z" fill="#9c9c9c"/><circle cx="9.6" cy="8.4" r="1.9" fill="#fff"/><circle cx="18.6" cy="8.4" r="1.9" fill="#fff"/><path d="M40.500 20.400c0-5.400-5.400-9.800-12-9.800s-12 4.400-12 9.800 5.400 9.800 12 9.800c1.400 0 2.800-0.200 4-0.600l3.700 2-1-3.300c3.200-1.800 5.300-4.700 5.300-7.900z" fill="#9c9c9c"/><circle cx="24.6" cy="17.6" r="1.6" fill="#fff"/><circle cx="32.400" cy="17.600" r="1.600" fill="#fff"/></g></svg>
<span class="n" style="top:750px;font-size:29.3px;color:rgba(110,110,110,0.6);line-height:36px;left:742px;letter-spacing:1.05px;">公众号<span style="margin:0 2.5px 0 1.5px"> · </span>跨境电商超仔</span>
</body></html>
